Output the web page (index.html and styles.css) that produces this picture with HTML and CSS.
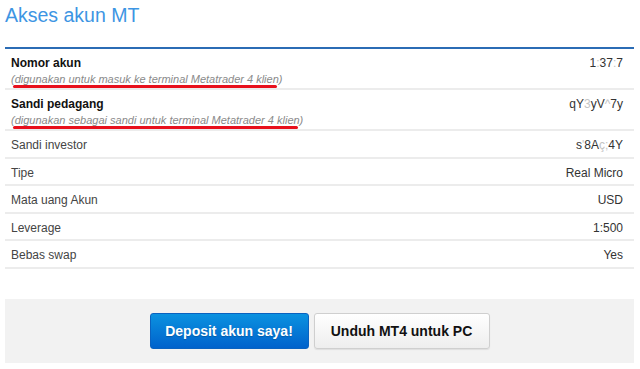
FILE: index.html
```html
<!doctype html>
<html lang="id">
<head>
	<meta charset="UTF-8">
	<title>Akses akun MT</title>
	<link rel="stylesheet" href="styles.css">
</head>
<body>
<div class="panel">
	<h2 class="title">Akses akun MT</h2>

	<div class="info">
		<div class="row tall">
			<div>
				<div class="label">Nomor akun</div>
				<div class="note"><span class="mark">(digunakan untuk masuk ke terminal Metatrader 4 klien)</span></div>
			</div>
			<div class="value">1<span class="fz">:</span>37<span class="fz">:</span>7</div>
		</div>
		<div class="row tall">
			<div>
				<div class="label">Sandi pedagang</div>
				<div class="note"><span class="mark">(digunakan sebagai sandi untuk terminal Metatrader 4 klien)</span></div>
			</div>
			<div class="value">qY<span class="fz">3</span>yV<span class="fz">^</span>7y</div>
		</div>
		<div class="row">
			<div>Sandi investor</div>
			<div class="value">s<span class="fz">'</span>8A<span class="fz">ç;</span>4Y</div>
		</div>
		<div class="row">
			<div>Tipe</div>
			<div class="value">Real Micro</div>
		</div>
		<div class="row">
			<div>Mata uang Akun</div>
			<div class="value">USD</div>
		</div>
		<div class="row">
			<div>Leverage</div>
			<div class="value">1:500</div>
		</div>
		<div class="row">
			<div>Bebas swap</div>
			<div class="value">Yes</div>
		</div>
	</div>

	<div class="actions">
		<button type="button" class="btn btn-blue">Deposit akun saya!</button>
		<button type="button" class="btn btn-white">Unduh MT4 untuk PC</button>
	</div>
</div>
</body>
</html>
```

FILE: styles.css
```css
body{
	margin: 0;
	background: #fff;
	font-family: "Liberation Sans", Arial, sans-serif;
	color: #444;
}
.panel{
	padding: 0 6px 0 5px;
}
.title{
	margin: 3px 0 20px;
	font-size: 19.5px;
	line-height: 24px;
	font-weight: normal;
	color: #3d95e3;
}
.info{
	border-top: 2px solid #2b6cb5;
}
.row{
	display: flex;
	justify-content: space-between;
	align-items: flex-start;
	padding: 6px 11px 3.5px 6px;
	height: 16px;
	line-height: 16px;
	font-size: 12px;
	border-bottom: 2px solid #ececec;
}
.row.tall{
	height: 29px;
	padding-top: 6px;
	padding-bottom: 4px;
}
.label{
	font-weight: bold;
	color: #111;
}
.note{
	margin-top: 1px;
	font-size: 11px;
	line-height: 14px;
	font-style: italic;
	color: #8a8a8a;
}
.mark{
	position: relative;
	display: inline-block;
}
.mark:after{
	content: "";
	position: absolute;
	left: 2px;
	right: 5px;
	bottom: -2px;
	height: 3px;
	border-radius: 2px;
	background: #e8101c;
}
.value{
	color: #333;
	text-align: right;
}
.fz{
	color: #c4c4c4;
}
.actions{
	margin-top: 30px;
	padding: 14px 0;
	background: #f2f2f2;
	display: flex;
	justify-content: center;
	gap: 5px;
}
.btn{
	height: 36px;
	padding: 0 12px;
	font-family: "Liberation Sans", Arial, sans-serif;
	font-size: 14px;
	font-weight: bold;
	border-radius: 3px;
	cursor: pointer;
}
.btn-blue{
	width: 159px;
	color: #fff;
	border: 1px solid #0a62c0;
	background: linear-gradient(#0b92e0, #0062cc);
	text-shadow: 0 1px 1px rgba(0,0,0,0.2);
}
.btn-white{
	width: 176px;
	color: #111;
	border: 1px solid #cfcfcf;
	background: linear-gradient(#fff, #eee);
	box-shadow: 0 1px 1px rgba(0,0,0,0.08);
}
```
